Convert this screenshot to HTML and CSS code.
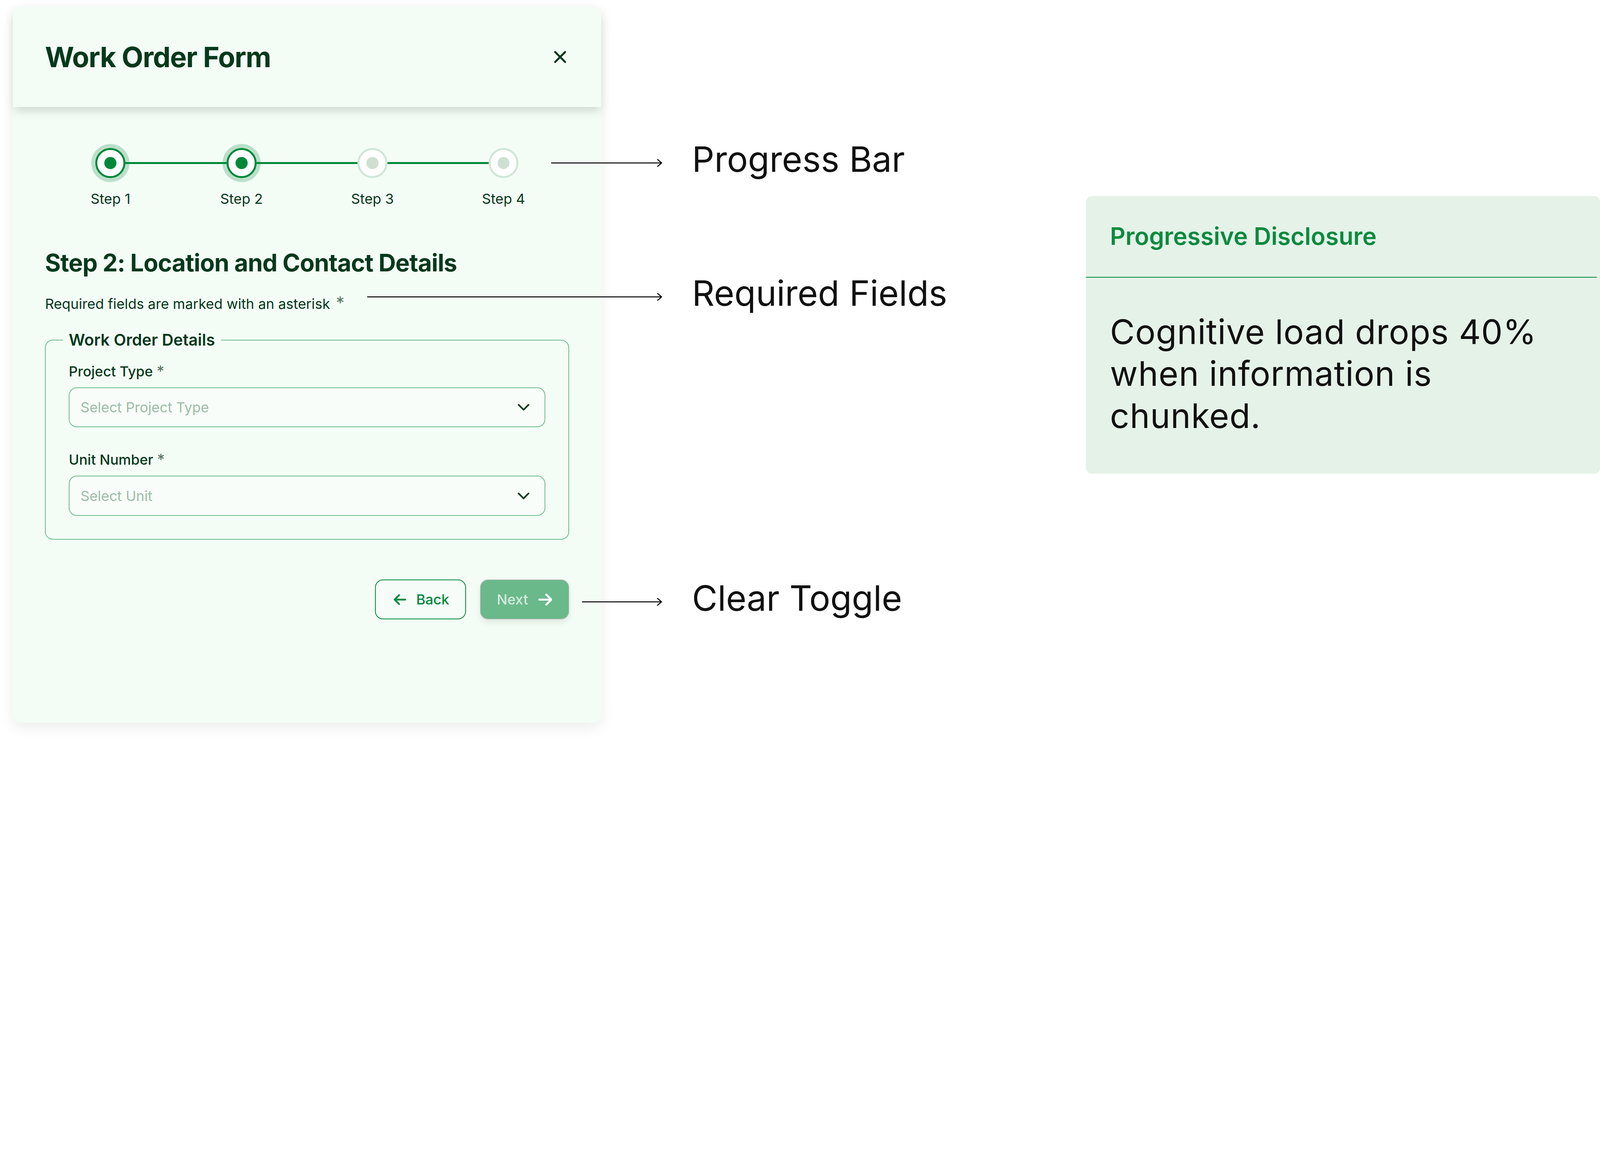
FILE: index.html
```html
<!DOCTYPE html>
<html lang="en">
<head>
    <meta charset="UTF-8">
    <meta name="viewport" content="width=device-width, initial-scale=1.0">
    <title>Work Order Form</title>
    <link rel="stylesheet" href="styles.css">
</head>
<body>

    <main class="stage">
        <section class="form-card">
            <header class="form-header">
                <h1>Work Order Form</h1>
                <button class="close-btn" aria-label="Close">
                    <svg viewBox="0 0 14 14"><path d="M2 2l10 10M12 2L2 12"/></svg>
                </button>
            </header>

            <div class="form-body">
                <ol class="stepper">
                    <li class="step done"><span class="step-dot"></span><span class="step-label">Step 1</span></li>
                    <li class="step done"><span class="step-dot"></span><span class="step-label">Step 2</span></li>
                    <li class="step"><span class="step-dot"></span><span class="step-label">Step 3</span></li>
                    <li class="step"><span class="step-dot"></span><span class="step-label">Step 4</span></li>
                </ol>

                <h2>Step 2: Location and Contact Details</h2>
                <p class="hint">Required fields are marked with an asterisk <span class="req">*</span></p>

                <fieldset>
                    <legend>Work Order Details</legend>
                    <div class="field">
                        <label>Project Type <span class="req">*</span></label>
                        <div class="select">
                            <span>Select Project Type</span>
                            <svg viewBox="0 0 12 7"><path d="M1 1l5 5 5-5"/></svg>
                        </div>
                    </div>
                    <div class="field">
                        <label>Unit Number <span class="req">*</span></label>
                        <div class="select">
                            <span>Select Unit</span>
                            <svg viewBox="0 0 12 7"><path d="M1 1l5 5 5-5"/></svg>
                        </div>
                    </div>
                </fieldset>

                <div class="actions">
                    <button class="btn btn-back">
                        <svg viewBox="0 0 448 512"><path d="M9.4 233.4c-12.5 12.5-12.5 32.8 0 45.3l160 160c12.5 12.5 32.8 12.5 45.3 0s12.5-32.8 0-45.3L109.2 288H416c17.7 0 32-14.3 32-32s-14.3-32-32-32H109.3L214.6 118.6c12.5-12.5 12.5-32.8 0-45.3s-32.8-12.5-45.3 0l-160 160z"/></svg>
                        Back
                    </button>
                    <button class="btn btn-next">
                        Next
                        <svg viewBox="0 0 448 512"><path d="M438.6 278.6c12.5-12.5 12.5-32.8 0-45.3l-160-160c-12.5-12.5-32.8-12.5-45.3 0s-12.5 32.8 0 45.3L338.8 224H32c-17.7 0-32 14.3-32 32s14.3 32 32 32h306.7L233.4 393.4c-12.5 12.5-12.5 32.8 0 45.3s32.8 12.5 45.3 0l160-160z"/></svg>
                    </button>
                </div>
            </div>
        </section>

        <aside class="note">
            <h3>Progressive Disclosure</h3>
            <p>Cognitive load drops 40% when information is chunked.</p>
        </aside>

        <!-- annotation callouts -->
        <div class="callout callout-progress">
            <svg class="arrow arrow-progress" viewBox="0 0 111 8"><path d="M0 4h110.5M106.5 0.6L110.5 4l-4 3.4"/></svg>
            <span>Progress Bar</span>
        </div>
        <div class="callout callout-required">
            <svg class="arrow arrow-required" viewBox="0 0 295 8"><path d="M0 4h294.5M290.5 0.6L294.5 4l-4 3.4"/></svg>
            <span>Required Fields</span>
        </div>
        <div class="callout callout-toggle">
            <svg class="arrow arrow-toggle" viewBox="0 0 80 8"><path d="M0 4h79.5M75.5 0.6L79.5 4l-4 3.4"/></svg>
            <span>Clear Toggle</span>
        </div>
    </main>

</body>
</html>
```

FILE: styles.css
```css
/* 1rem = 1/100 of the window width, so the 1600px-wide board fills it */
html {
    font-size: calc(100vw / 100);
    overflow: hidden;
}

* {
    box-sizing: border-box;
}

body {
    margin: 0;
    background: #ffffff;
    font-family: Inter, "Noto Sans", sans-serif;
    color: #05391b;
}

.stage {
    position: relative;
    width: 100rem;
    height: 46.375rem;
    display: flex;
    align-items: flex-start;
    justify-content: space-between;
    padding: 0.4375rem 0 0 0.8125rem;
    overflow: hidden;
}

/* form card */
.form-card {
    width: 36.75rem;
    height: 44.75rem;
    background: #f4fcf6;
    border-radius: 0.5rem;
    box-shadow: 0 0.25rem 0.875rem rgba(0, 0, 0, 0.08);
}

.form-header {
    position: relative;
    height: 6.25rem;
    padding: 0 2rem;
    display: flex;
    align-items: center;
    justify-content: space-between;
    border-radius: 0.5rem 0.5rem 0 0;
    background: #f4fcf6;
    box-shadow: 0 0.3125rem 0.625rem -0.125rem rgba(40, 70, 50, 0.22);
}

h1 {
    margin: 0;
    font-size: 1.75rem;
    font-weight: 700;
    letter-spacing: -0.02em;
    color: #05391b;
}

.close-btn {
    background: none;
    border: none;
    padding: 0.25rem;
    margin-right: -0.125rem;
    cursor: pointer;
    display: flex;
}

.close-btn svg {
    width: 0.875rem;
    height: 0.875rem;
    fill: none;
    stroke: #05391b;
    stroke-width: 2;
    stroke-linecap: round;
}

.form-body {
    padding: 2.5625rem 2rem 0;
}

/* progress stepper */
.stepper {
    list-style: none;
    margin: 0;
    padding: 0;
    display: grid;
    grid-template-columns: repeat(4, 1fr);
}

.step {
    position: relative;
    display: flex;
    flex-direction: column;
    align-items: center;
    gap: 0.6875rem;
}

.step:not(:last-child)::before {
    content: "";
    position: absolute;
    top: 0.875rem;
    left: 50%;
    width: 100%;
    height: 0.125rem;
    background: #00883a;
}

.step-dot {
    position: relative;
    width: 1.875rem;
    height: 1.875rem;
    border-radius: 50%;
    border: 0.125rem solid #cfe6d7;
    background: #ffffff;
    display: flex;
    align-items: center;
    justify-content: center;
}

.step-dot::after {
    content: "";
    width: 0.75rem;
    height: 0.75rem;
    border-radius: 50%;
    background: #cde0d2;
}

.step.done .step-dot {
    border-color: #00883a;
    box-shadow: 0 0 0 0.25rem rgba(0, 136, 58, 0.24);
}

.step.done .step-dot::after {
    background: #00883a;
}

.step-label {
    font-size: 0.875rem;
    line-height: 1.25rem;
    color: #0a3a1c;
}

h2 {
    margin: 2.4375rem 0 0.9375rem;
    font-size: 1.5rem;
    line-height: 1.875rem;
    font-weight: 700;
    letter-spacing: -0.015em;
    color: #05391b;
}

.hint {
    margin: 0 0 0.875rem;
    font-size: 0.875rem;
    line-height: 1.25rem;
    color: #05391b;
}

.req {
    font-size: 0.9375rem;
    color: #5b7762;
}

.hint .req {
    font-size: 1.0625rem;
    margin-left: 0.125rem;
}

/* fieldset */
fieldset {
    margin: 0;
    padding: 0.5625rem 1.4375rem 1.4375rem;
    border: 0.0625rem solid #6dbb8a;
    border-radius: 0.5rem;
}

legend {
    padding: 0 0.375rem;
    margin-left: -0.375rem;
    font-size: 1rem;
    line-height: 1.5rem;
    font-weight: 600;
    color: #05391b;
}

.field + .field {
    margin-top: 1.375rem;
}

.field label {
    display: block;
    margin-bottom: 0.375rem;
    font-size: 0.875rem;
    line-height: 1.25rem;
    font-weight: 500;
    color: #0a3a1c;
}

.select {
    height: 2.5rem;
    padding: 0 0.9375rem 0 0.6875rem;
    display: flex;
    align-items: center;
    justify-content: space-between;
    background: #f8fdf9;
    border: 0.0625rem solid #6dbb8a;
    border-radius: 0.5rem;
    font-size: 0.875rem;
    color: #9dbca7;
}

.select svg {
    width: 0.75rem;
    height: 0.4375rem;
    fill: none;
    stroke: #05391b;
    stroke-width: 1.6;
    stroke-linecap: round;
    stroke-linejoin: round;
}

/* buttons */
.actions {
    margin-top: 2.5rem;
    display: flex;
    justify-content: flex-end;
    gap: 0.875rem;
}

.btn {
    height: 2.5rem;
    padding: 0 1rem;
    display: flex;
    align-items: center;
    gap: 0.625rem;
    border-radius: 0.5rem;
    font-family: Inter, "Noto Sans", sans-serif;
    font-size: 0.875rem;
    font-weight: 500;
    cursor: pointer;
}

.btn svg {
    width: 0.875rem;
    height: 1rem;
    fill: currentColor;
}

.btn-back {
    width: 5.6875rem;
    padding-left: 1.125rem;
    background: #f6fdf8;
    border: 0.0625rem solid #00883a;
    color: #00883a;
}

.btn-next {
    width: 5.5625rem;
    background: #69b98a;
    border: 0.0625rem solid #a3b9ab;
    color: rgba(255, 255, 255, 0.72);
    box-shadow: 0 0.1875rem 0.375rem rgba(0, 0, 0, 0.08);
}

.btn-next svg {
    fill: #ffffff;
}

/* side note */
.note {
    width: 32.125rem;
    margin-top: 11.8125rem;
    background: #e5f2e8;
    border-radius: 0.375rem;
}

.note h3 {
    margin: 0 0.1875rem 0 0;
    padding: 1.5rem;
    font-size: 1.5rem;
    line-height: 2.0625rem;
    font-weight: 600;
    color: #0b8a3e;
    border-bottom: 0.0625rem solid #00883a;
}

.note p {
    margin: 0;
    padding: 2.0625rem 3.125rem 2.3125rem 1.5rem;
    font-size: 2.125rem;
    line-height: 2.625rem;
    letter-spacing: 0.01em;
    color: #111111;
}

/* callouts */
.callout {
    position: absolute;
    display: flex;
    align-items: flex-start;
    gap: 1.875rem;
    font-size: 2.1875rem;
    line-height: 2.5rem;
    color: #111111;
    white-space: nowrap;
}

.arrow {
    height: 0.5rem;
    margin-top: 1.21875rem;
    fill: none;
    stroke: #000000;
    stroke-width: 1;
    stroke-linecap: round;
    stroke-linejoin: round;
}

.arrow-progress { width: 6.9375rem; }
.arrow-required { width: 18.4375rem; }
.arrow-toggle { width: 5rem; }

.callout-progress {
    left: 34.4375rem;
    top: 8.71875rem;
}

.callout-required {
    left: 22.9375rem;
    top: 17.09375rem;
}

.callout-toggle {
    left: 36.375rem;
    top: 36.15625rem;
}
```
